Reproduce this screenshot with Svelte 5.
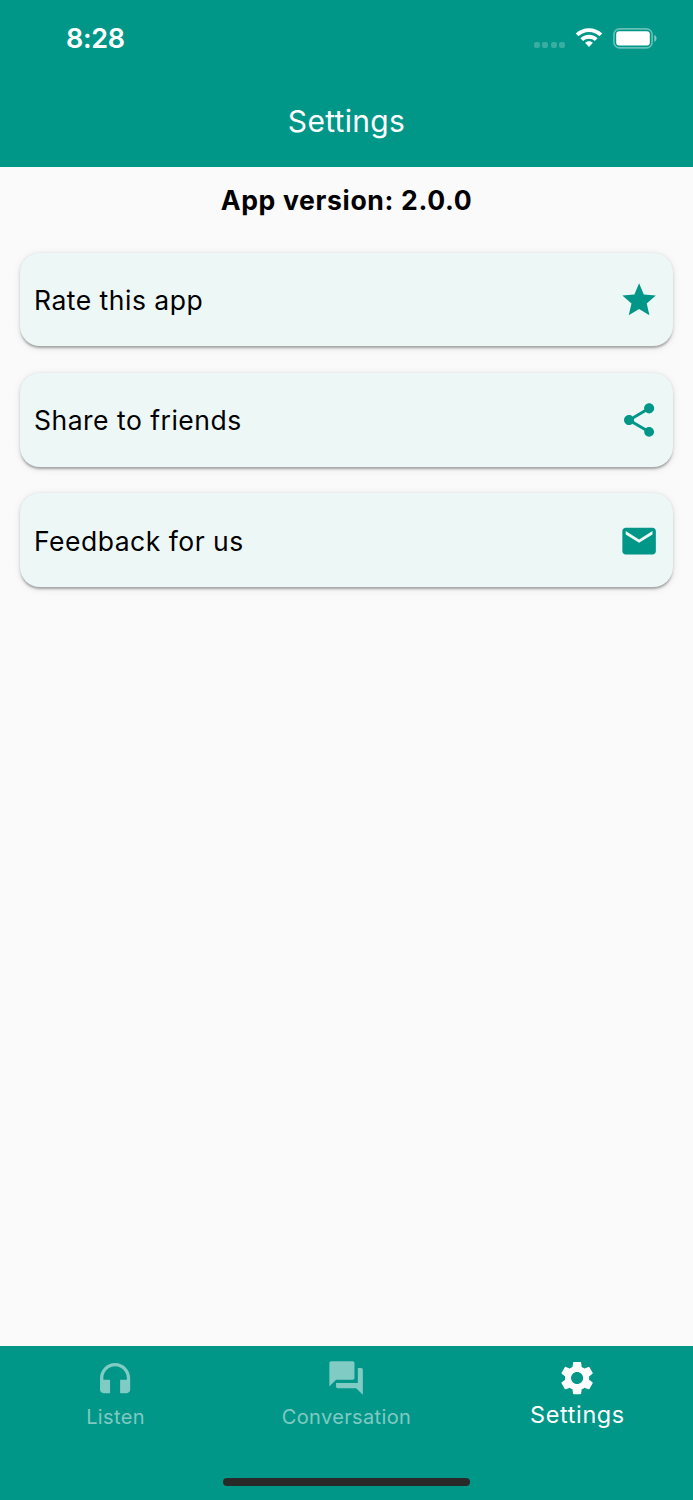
<script lang="ts">
  interface Item {
    id: string;
    label: string;
    icon: string;
  }

  const version = "2.0.0";

  const actions: Item[] = [
    {
      id: "rate",
      label: "Rate this app",
      icon: "M12 17.27L18.18 21l-1.64-7.03L22 9.24l-7.19-.61L12 2 9.19 8.63 2 9.24l5.46 4.73L5.82 21z",
    },
    {
      id: "share",
      label: "Share to friends",
      icon: "M18 16.08c-.76 0-1.44.3-1.96.77L8.91 12.7c.05-.23.09-.46.09-.7s-.04-.47-.09-.7l7.05-4.11c.54.5 1.25.81 2.04.81 1.66 0 3-1.34 3-3s-1.34-3-3-3-3 1.34-3 3c0 .24.04.47.09.7L8.04 9.81C7.5 9.31 6.79 9 6 9c-1.66 0-3 1.34-3 3s1.34 3 3 3c.79 0 1.5-.31 2.04-.81l7.12 4.16c-.05.21-.08.43-.08.65 0 1.61 1.31 2.92 2.92 2.92s2.92-1.31 2.92-2.92-1.31-2.92-2.92-2.92z",
    },
    {
      id: "feedback",
      label: "Feedback for us",
      icon: "M20 4H4c-1.1 0-1.99.9-1.99 2L2 18c0 1.1.9 2 2 2h16c1.1 0 2-.9 2-2V6c0-1.1-.9-2-2-2zm0 4l-8 5-8-5V6l8 5 8-5v2z",
    },
  ];

  const tabs: Item[] = [
    {
      id: "listen",
      label: "Listen",
      icon: "M12 3c-4.97 0-9 4.03-9 9v7c0 1.1.9 2 2 2h4v-8H5v-1c0-3.87 3.13-7 7-7s7 3.13 7 7v1h-4v8h4c1.1 0 2-.9 2-2v-7c0-4.97-4.03-9-9-9z",
    },
    {
      id: "conversation",
      label: "Conversation",
      icon: "M21 6h-2v9H6v2c0 .55.45 1 1 1h11l4 4V7c0-.55-.45-1-1-1zm-4 6V3c0-.55-.45-1-1-1H3c-.55 0-1 .45-1 1v14l4-4h10c.55 0 1-.45 1-1z",
    },
    {
      id: "settings",
      label: "Settings",
      icon: "M19.14 12.94c.04-.3.06-.61.06-.94 0-.32-.02-.64-.07-.94l2.03-1.58c.18-.14.23-.41.12-.61l-1.92-3.32c-.12-.22-.37-.29-.59-.22l-2.39.96c-.5-.38-1.03-.7-1.62-.94l-.36-2.54c-.04-.24-.24-.41-.48-.41h-3.84c-.24 0-.43.17-.47.41l-.36 2.54c-.59.24-1.13.57-1.62.94l-2.39-.96c-.22-.08-.47 0-.59.22L2.74 8.87c-.12.21-.08.47.12.61l2.03 1.58c-.05.3-.09.63-.09.94s.02.64.07.94l-2.03 1.58c-.18.14-.23.41-.12.61l1.92 3.32c.12.22.37.29.59.22l2.39-.96c.5.38 1.03.7 1.62.94l.36 2.54c.05.24.24.41.48.41h3.84c.24 0 .44-.17.47-.41l.36-2.54c.59-.24 1.13-.56 1.62-.94l2.39.96c.22.08.47 0 .59-.22l1.92-3.32c.12-.22.07-.47-.12-.61l-2.01-1.58zM12 15.6c-1.98 0-3.6-1.62-3.6-3.6s1.62-3.6 3.6-3.6 3.6 1.62 3.6 3.6-1.62 3.6-3.6 3.6z",
    },
  ];

  let selected = $state("settings");
</script>

<div class="screen">
  <header>
    <div class="status">
      <span class="time">8:28</span>
      <div class="indicators">
        <div class="signal"><i></i><i></i><i></i><i></i></div>
        <svg class="wifi" viewBox="0 0 28 20" aria-hidden="true">
          <path d="M14 0.2C8.8 0.2 4.1 2.2 0.7 5.5L3.5 8.3C6.2 5.7 9.9 4.1 14 4.1s7.8 1.6 10.5 4.2l2.8-2.8C23.9 2.2 19.2.2 14 .2z" />
          <path d="M14 6.8c-3.3 0-6.3 1.3-8.6 3.4l2.8 2.8c1.5-1.4 3.6-2.3 5.8-2.3s4.3.9 5.8 2.3l2.8-2.8C20.3 8.1 17.3 6.8 14 6.8z" />
          <path d="M14 13.2c-1.5 0-2.9.6-3.9 1.5L14 19l3.9-4.3c-1-.9-2.4-1.5-3.9-1.5z" />
        </svg>
        <svg class="battery" viewBox="0 0 44 21" aria-hidden="true">
          <rect x="0.9" y="0.9" width="38.2" height="19" rx="5.6" fill="none" stroke="#fff" stroke-opacity="0.4" stroke-width="1.6" />
          <rect x="3.2" y="3.2" width="33.6" height="14.4" rx="3" />
          <path d="M41.3 7v6.8c1.4-.6 2.2-1.9 2.2-3.4s-.8-2.8-2.2-3.4z" fill-opacity="0.5" />
        </svg>
      </div>
    </div>
    <h1>Settings</h1>
  </header>

  <main>
    <p class="version">App version: {version}</p>
    <div class="actions">
      {#each actions as action (action.id)}
        <button type="button" class="card">
          <span>{action.label}</span>
          <svg class="icon" viewBox="0 0 24 24" aria-hidden="true"><path d={action.icon} /></svg>
        </button>
      {/each}
    </div>
  </main>

  <nav>
    <div class="tabs">
      {#each tabs as tab (tab.id)}
        <button
          type="button"
          class="tab"
          class:active={selected === tab.id}
          onclick={() => (selected = tab.id)}
        >
          <svg class="icon" viewBox="0 0 24 24" aria-hidden="true"><path d={tab.icon} /></svg>
          <span>{tab.label}</span>
        </button>
      {/each}
    </div>
    <div class="home-indicator"></div>
  </nav>
</div>

<style>
  :global(body) {
    margin: 0;
  }
  .screen {
    display: flex;
    flex-direction: column;
    height: 1500px;
    background: #fafafa;
    color: #000;
    font-family: Inter, "Liberation Sans", sans-serif;
  }
  button {
    border: none;
    background: none;
    color: inherit;
    font-family: inherit;
    cursor: pointer;
  }
  svg {
    display: block;
    fill: currentColor;
  }
  .icon {
    width: 40.2px;
    height: 40.2px;
    flex: none;
  }
  header {
    height: 167.4px;
    background: #009688;
    color: #fff;
  }
  .status {
    display: flex;
    align-items: center;
    justify-content: space-between;
    height: 76px;
    padding: 0 36px 0 66px;
  }
  .time {
    font-size: 27px;
    font-weight: 600;
    letter-spacing: -0.3px;
  }
  .indicators {
    display: flex;
    align-items: center;
  }
  .signal {
    display: flex;
    gap: 2.4px;
    margin: 14px 10px 0 0;
  }
  .signal i {
    width: 6px;
    height: 6px;
    border-radius: 2px;
    background: rgba(255, 255, 255, 0.22);
  }
  .wifi {
    width: 28px;
    height: 20px;
    margin-right: 10px;
  }
  .battery {
    width: 44px;
    height: 21px;
  }
  h1 {
    margin: 0;
    font-size: 30px;
    font-weight: 400;
    line-height: 91px;
    letter-spacing: 0.3px;
    text-align: center;
  }
  main {
    flex: 1;
    padding: 0 20px;
  }
  .version {
    margin: 0;
    padding-top: 1px;
    font-size: 26.6px;
    font-weight: 700;
    line-height: 64px;
    letter-spacing: 0.65px;
    text-align: center;
  }
  .actions {
    display: flex;
    flex-direction: column;
    gap: 26.8px;
    margin-top: 20.2px;
  }
  .card {
    display: flex;
    align-items: center;
    justify-content: space-between;
    height: 93.6px;
    padding: 1px 13.5px 0 14px;
    border-radius: 20px;
    background: #edf7f6;
    box-shadow:
      0 3.4px 2px -1.7px rgba(0, 0, 0, 0.2),
      0 1.7px 3.4px rgba(0, 0, 0, 0.14),
      0 1.7px 8px rgba(0, 0, 0, 0.08);
    font-size: 26.5px;
    letter-spacing: 0.5px;
  }
  .card .icon {
    color: #009688;
  }
  nav {
    display: flex;
    flex-direction: column;
    align-items: center;
    height: 154.5px;
    background: #009688;
  }
  .tabs {
    display: flex;
    width: 100%;
    height: 97px;
  }
  .tab {
    display: flex;
    flex: 1;
    flex-direction: column;
    align-items: center;
    padding: 12px 0 0;
    color: rgba(255, 255, 255, 0.5);
    font-size: 20px;
    line-height: 38px;
    letter-spacing: 0.35px;
  }
  .tab.active {
    color: #fff;
    font-size: 23.4px;
    line-height: 34px;
    letter-spacing: 0.65px;
  }
  .home-indicator {
    width: 247px;
    height: 8px;
    margin-top: 35.5px;
    border-radius: 4px;
    background: #292929;
  }
</style>
